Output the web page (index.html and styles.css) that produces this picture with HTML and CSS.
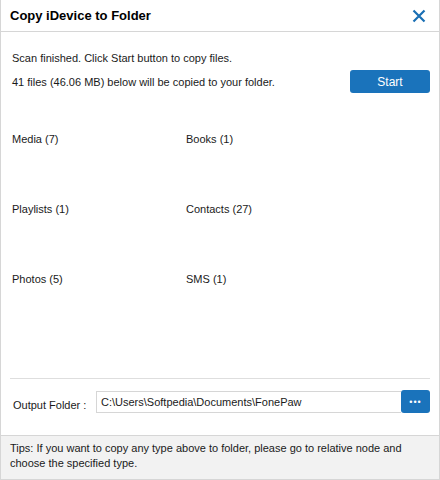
FILE: index.html
```html
<!DOCTYPE html>
<html lang="en">
<head>
  <meta charset="UTF-8">
  <title>Copy iDevice to Folder</title>
  <link rel="stylesheet" href="styles.css">
</head>
<body>

<div class="dialog">
  <div class="titlebar">
    <h1>Copy iDevice to Folder</h1>
    <span class="close">
      <svg width="14" height="14" viewBox="0 0 14 14"><path d="M1.5 1.5L12.5 12.5M12.5 1.5L1.5 12.5" stroke="#1a6fb4" stroke-width="2.2" fill="none"/></svg>
    </span>
  </div>

  <div class="content">
    <p class="msg">Scan finished. Click Start button to copy files.</p>
    <div class="summary">
      <p>41 files (46.06 MB) below will be copied to your folder.</p>
      <button class="btn start">Start</button>
    </div>

    <div class="types">
      <div>Media (7)</div>
      <div>Books (1)</div>
      <div>Playlists (1)</div>
      <div>Contacts (27)</div>
      <div>Photos (5)</div>
      <div>SMS (1)</div>
    </div>

    <div class="output">
      <label>Output Folder :</label>
      <div class="path">C:\Users\Softpedia\Documents\FonePaw</div>
      <button class="btn browse">&bull;&bull;&bull;</button>
    </div>
  </div>

  <div class="tips">
    Tips: If you want to copy any type above to folder, please go to relative node and choose the specified type.
  </div>
</div>

</body>
</html>
```

FILE: styles.css
```css
body { margin: 0; font-family: "Liberation Sans", Arial, sans-serif; font-size: 11px; color: #1a1a1a; background: #fff; }
.dialog { width: 440px; height: 480px; box-sizing: border-box; border: 1px solid #d6d6d6; border-top: none; display: flex; flex-direction: column; }
.titlebar { height: 32px; box-sizing: border-box; border-bottom: 1px solid #d6d6d6; display: flex; align-items: center; justify-content: space-between; padding: 0 13px 0 9px; }
.titlebar h1 { margin: 0; font-size: 13px; font-weight: bold; color: #000; }
.close { display: flex; }
.content { flex: 1; padding: 0 9px 0 11px; display: flex; flex-direction: column; }
.msg { margin: 20px 0 0; }
.summary { display: flex; justify-content: space-between; align-items: center; margin-top: 6px; }
.summary p { margin: 0; }
.btn { background: #1a73bb; color: #fff; border: none; border-radius: 3px; font-family: inherit; cursor: pointer; }
.start { width: 80px; height: 23px; font-size: 12px; }
.types { display: grid; grid-template-columns: 174px 1fr; grid-auto-rows: 70px; margin-top: 40px; flex: 1; }
.output { border-top: 1px solid #dedede; display: flex; align-items: center; padding: 11px 0 22px; margin-left: -2px; }
.output label { width: 83px; padding-left: 3px; margin-top: 6px; }
.path { flex: 1; height: 22px; box-sizing: border-box; border: 1px solid #d6d6d6; border-right: none; padding: 0 4px; line-height: 20px; font-size: 11px; }
.browse { width: 29px; height: 23px; font-size: 9px; letter-spacing: 1px; }
.tips { background: #f2f2f2; border-top: 1px solid #d6d6d6; height: 44px; box-sizing: border-box; padding: 5px 9px; line-height: 15px; }
```
